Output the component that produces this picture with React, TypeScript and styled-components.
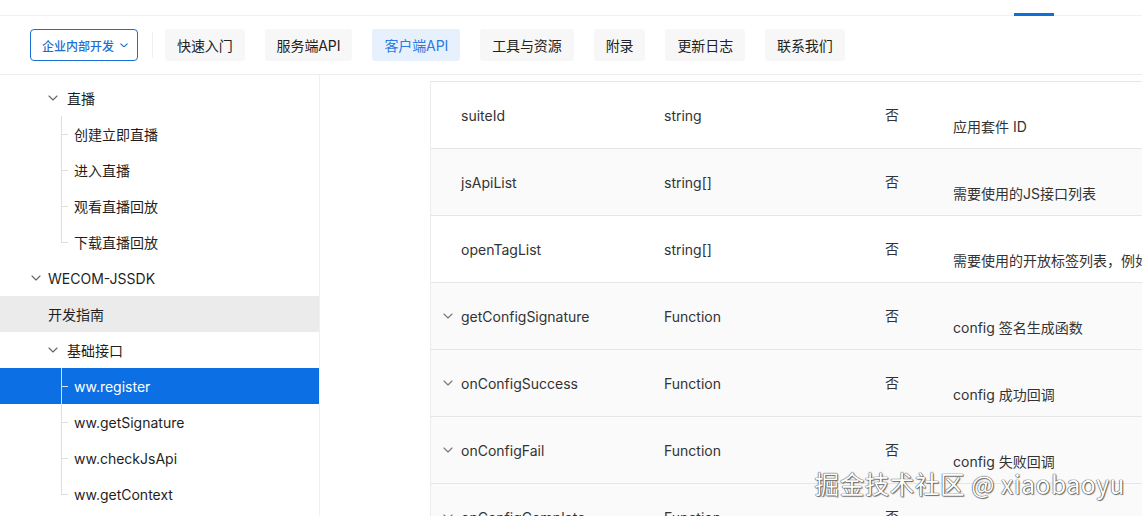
import React from "react";
import styled, { createGlobalStyle } from "styled-components";

const Global = createGlobalStyle`
  html, body { margin: 0; padding: 0; background: #fff; }
  body {
    width: 1142px; height: 516px; overflow: hidden;
    font-family: Inter, "Noto Sans CJK SC", sans-serif;
    font-size: 14px; color: #1f1f1f;
    -webkit-font-smoothing: antialiased;
  }
  * { box-sizing: border-box; }
`;

const Page = styled.div`
  position: relative;
  display: flex;
  flex-direction: column;
  width: 1142px;
  height: 516px;
  overflow: hidden;
`;

const TopStrip = styled.div`
  height: 16px;
  display: flex;
  justify-content: flex-end;
  align-items: flex-end;
  padding-right: 88px;
  border-bottom: 1px solid #f0f0f0;
`;

const TopIndicator = styled.div`
  width: 40px;
  height: 3px;
  margin-bottom: -1px;
  background: #0b6fd8;
`;

const NavBar = styled.div`
  height: 59px;
  display: flex;
  align-items: center;
  padding-left: 30px;
  border-bottom: 1px solid #ececec;
`;

const ScopeButton = styled.button`
  height: 32px;
  width: 108px;
  display: flex;
  align-items: center;
  justify-content: center;
  gap: 6px;
  border: 1px solid #1a6fd3;
  border-radius: 4px;
  background: #fff;
  color: #1a6fd3;
  font-family: "Noto Sans CJK SC", sans-serif;
  font-size: 12px;
  font-weight: 500;
  padding: 0 0 0 2px;
`;

const NavDivider = styled.div`
  width: 1px;
  height: 26px;
  background: #efefef;
  margin: 0 12px 0 14px;
`;

const Tabs = styled.div`
  display: flex;
  gap: 20px;
`;

const Tab = styled.div<{ $active?: boolean }>`
  height: 32px;
  display: flex;
  align-items: center;
  padding: 0 12px;
  border-radius: 3px;
  background: ${(p) => (p.$active ? "#e7f1fd" : "#f7f7f7")};
  color: ${(p) => (p.$active ? "#2a7ae2" : "#222")};
  font-size: 14px;
  letter-spacing: -0.1px;
`;

const Body = styled.div`
  flex: 1;
  display: flex;
  min-height: 0;
`;

const Sidebar = styled.div`
  width: 320px;
  flex-shrink: 0;
  border-right: 1px solid #f0f0f0;
  padding-top: 5px;
  display: flex;
  flex-direction: column;
`;

const Item = styled.div<{ $indent: number; $state?: "selected" | "current" }>`
  height: 36px;
  flex-shrink: 0;
  display: flex;
  align-items: center;
  padding-left: ${(p) => p.$indent}px;
  background: ${(p) =>
    p.$state === "selected" ? "#0c70e4" : p.$state === "current" ? "#ebebeb" : "transparent"};
  color: ${(p) => (p.$state === "selected" ? "#fff" : "#1f1f1f")};
  font-size: 14px;
`;

const Caret = styled.span<{ $gap: number }>`
  display: flex;
  width: 10px;
  margin-right: ${(p) => p.$gap}px;
  color: #666;
`;

const Branch = styled.span<{ $last?: boolean }>`
  align-self: stretch;
  width: 13px;
  flex-shrink: 0;
  background-image: linear-gradient(#dedede, #dedede), linear-gradient(#dedede, #dedede);
  background-repeat: no-repeat;
  background-position: left top, left center;
  background-size: 1px ${(p) => (p.$last ? "50%" : "100%")}, 7px 1px;
`;

const Content = styled.div`
  flex: 1;
  padding: 6px 0 0 110px;
  min-width: 0;
`;

const Table = styled.div`
  border-left: 1px solid #ececec;
  border-top: 1px solid #e6e6e6;
`;

const Row = styled.div<{ $shade?: boolean }>`
  height: 67px;
  display: grid;
  grid-template-columns: 30px 203px 221px 68px 1fr;
  align-items: center;
  border-bottom: 1px solid #e6e6e6;
  background: ${(p) => (p.$shade ? "#fafafa" : "#fff")};
  color: #333;
  font-size: 14px;
  white-space: nowrap;
`;

const Expander = styled.span`
  display: flex;
  justify-content: flex-end;
  padding-right: 8px;
  color: #777;
`;

const Cell = styled.span``;

const Required = styled.span`
  margin-top: -2px;
`;

const Desc = styled.span`
  padding-top: 22px;
  overflow: hidden;
`;

const Watermark = styled.div`
  position: absolute;
  right: 17px;
  bottom: 15px;
  font-family: "Noto Sans CJK SC", sans-serif;
  font-size: 24.5px;
  letter-spacing: 0.6px;
  color: #fff;
  text-shadow: 0 0 1px #333, 0 0 1px #333, 1px 1px 1px rgba(0, 0, 0, 0.5);
  pointer-events: none;
`;

const Chevron = ({ color = "currentColor", w = 10, sw = 1.1 }: { color?: string; w?: number; sw?: number }) => (
  <svg width={w} height={w * 0.6} viewBox="0 0 10 6" fill="none">
    <path d="M1 1 L5 5 L9 1" stroke={color} strokeWidth={sw} strokeLinecap="round" strokeLinejoin="round" />
  </svg>
);

const tabs = ["快速入门", "服务端API", "客户端API", "工具与资源", "附录", "更新日志", "联系我们"];

type Node = {
  label: string;
  indent: number;
  caret?: number;
  branch?: "mid" | "last";
  state?: "selected" | "current";
};

const nodes: Node[] = [
  { label: "直播", indent: 48, caret: 9 },
  { label: "创建立即直播", indent: 61, branch: "mid" },
  { label: "进入直播", indent: 61, branch: "mid" },
  { label: "观看直播回放", indent: 61, branch: "mid" },
  { label: "下载直播回放", indent: 61, branch: "last" },
  { label: "WECOM-JSSDK", indent: 31, caret: 7 },
  { label: "开发指南", indent: 48, state: "current" },
  { label: "基础接口", indent: 48, caret: 9 },
  { label: "ww.register", indent: 61, branch: "mid", state: "selected" },
  { label: "ww.getSignature", indent: 61, branch: "mid" },
  { label: "ww.checkJsApi", indent: 61, branch: "mid" },
  { label: "ww.getContext", indent: 61, branch: "last" },
];

type Param = { name: string; type: string; desc: string; expand?: boolean; shade?: boolean };

const params: Param[] = [
  { name: "suiteId", type: "string", desc: "应用套件 ID" },
  { name: "jsApiList", type: "string[]", desc: "需要使用的JS接口列表", shade: true },
  { name: "openTagList", type: "string[]", desc: "需要使用的开放标签列表，例如 ['wx-open-launch-app']" },
  { name: "getConfigSignature", type: "Function", desc: "config 签名生成函数", expand: true, shade: true },
  { name: "onConfigSuccess", type: "Function", desc: "config 成功回调", expand: true, shade: true },
  { name: "onConfigFail", type: "Function", desc: "config 失败回调", expand: true, shade: true },
  { name: "onConfigComplete", type: "Function", desc: "config 完成回调", expand: true, shade: true },
];

export default function App() {
  return (
    <Page>
      <Global />
      <TopStrip>
        <TopIndicator />
      </TopStrip>
      <NavBar>
        <ScopeButton>
          企业内部开发
          <Chevron w={8} sw={1.4} />
        </ScopeButton>
        <NavDivider />
        <Tabs>
          {tabs.map((t) => (
            <Tab key={t} $active={t === "客户端API"}>
              {t}
            </Tab>
          ))}
        </Tabs>
      </NavBar>
      <Body>
        <Sidebar>
          {nodes.map((n) => (
            <Item key={n.label} $indent={n.indent} $state={n.state}>
              {n.caret !== undefined && (
                <Caret $gap={n.caret}>
                  <Chevron />
                </Caret>
              )}
              {n.branch && <Branch $last={n.branch === "last"} />}
              {n.label}
            </Item>
          ))}
        </Sidebar>
        <Content>
          <Table>
            {params.map((p) => (
              <Row key={p.name} $shade={p.shade}>
                <Expander>{p.expand && <Chevron />}</Expander>
                <Cell>{p.name}</Cell>
                <Cell>{p.type}</Cell>
                <Required>否</Required>
                <Desc>{p.desc}</Desc>
              </Row>
            ))}
          </Table>
        </Content>
      </Body>
      <Watermark>掘金技术社区 @ xiaobaoyu</Watermark>
    </Page>
  );
}
